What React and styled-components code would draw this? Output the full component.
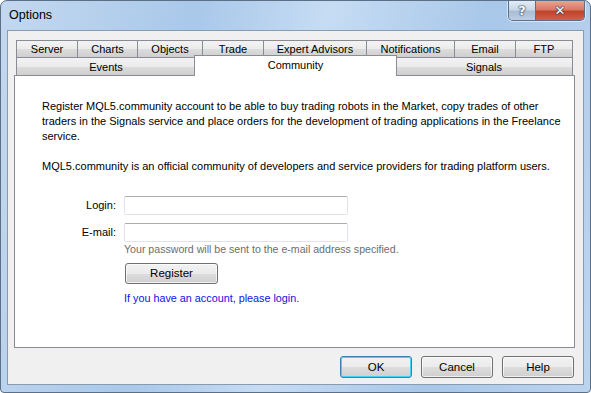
import React from 'react';
import styled, { createGlobalStyle } from 'styled-components';

const GlobalStyle = createGlobalStyle`
  html, body {
    margin: 0;
    padding: 0;
    background: #ffffff;
  }
  body {
    font-family: Tahoma, "Liberation Sans", Arial, sans-serif;
    font-size: 11px;
    color: #000;
  }
`;

const Window = styled.div`
  width: 591px;
  height: 393px;
  box-sizing: border-box;
  border: 1px solid #5b6f86;
  border-radius: 7px 7px 4px 4px;
  background: linear-gradient(
    100deg,
    #c3d8ef 0%,
    #a9c8ea 30%,
    #c6dcf3 50%,
    #a8c7e9 75%,
    #bcd4ee 100%
  );
  display: flex;
  flex-direction: column;
  overflow: hidden;
`;

const TitleBar = styled.div`
  height: 28px;
  display: flex;
  align-items: flex-start;
  justify-content: space-between;
  padding-left: 8px;
`;

const Title = styled.div`
  font-family: "Liberation Sans", Arial, sans-serif;
  font-size: 12.5px;
  line-height: 28px;
  color: #000;
`;

const CaptionButtons = styled.div`
  display: flex;
  margin-right: 5px;
  border: 1px solid #5d6f86;
  border-top: none;
  border-radius: 0 0 5px 5px;
  overflow: hidden;
  box-shadow: 0 0 0 1px rgba(255, 255, 255, 0.5);
`;

const CaptionButton = styled.div`
  width: ${(p) => p.width}px;
  height: 19px;
  display: flex;
  align-items: center;
  justify-content: center;
  color: #fff;
  font-family: "DejaVu Sans", sans-serif;
  font-weight: bold;
  font-size: ${(p) => p.size}px;
  text-shadow: 0 0 1px #2a3a50, 0 0 1px #2a3a50, 0 0 2px #2a3a50;
  background: ${(p) =>
    p.close
      ? 'linear-gradient(to bottom, #e8a493 0%, #d77b66 45%, #c0432a 55%, #d1604a 100%)'
      : 'linear-gradient(to bottom, #e3ecf6 0%, #c9d8e8 45%, #a9bdd4 55%, #bccfe3 100%)'};
  & + & {
    border-left: 1px solid #5d6f86;
  }
`;

const Client = styled.div`
  flex: 1;
  margin: 1px 6px 7px 6px;
  background: #f0f0f0;
  border: 1px solid #8a9bb0;
  display: flex;
  flex-direction: column;
  padding: 9px 8px 0 6px;
`;

const TabStrip = styled.div`
  display: flex;
  flex-direction: column;
  padding: 0 2px;
`;

const TabRow = styled.div`
  display: flex;
  height: ${(p) => (p.front ? 18 : 17)}px;
`;

const Tab = styled.div`
  width: ${(p) => p.width}px;
  box-sizing: border-box;
  border: 1px solid #898c95;
  border-bottom: none;
  margin-left: -1px;
  &:first-child {
    margin-left: 0;
  }
  background: linear-gradient(to bottom, #f3f3f3 0%, #ebebeb 50%, #dddddd 51%, #cfcfcf 100%);
  display: flex;
  align-items: center;
  justify-content: center;
  font-size: 11px;
  font-family: "Liberation Sans", Arial, sans-serif;
  white-space: nowrap;
`;

const ActiveTab = styled(Tab)`
  position: relative;
  z-index: 2;
  background: #ffffff;
  height: 21px;
  margin-top: -2px;
  margin-left: -2px;
  margin-right: -1px;
  width: ${(p) => p.width + 2}px;
  align-items: flex-start;
  padding-top: 3px;
`;

const Panel = styled.div`
  position: relative;
  z-index: 1;
  height: 273px;
  box-sizing: border-box;
  background: #ffffff;
  border: 1px solid #898c95;
  padding: 23px 0 0 27px;
  font-family: "Liberation Sans", Arial, sans-serif;
  font-size: 11px;
  line-height: 15px;
`;

const Para = styled.p`
  margin: 0 0 15px 0;
  white-space: nowrap;
`;

const Form = styled.div`
  display: grid;
  grid-template-columns: 74px 224px;
  column-gap: 8px;
  row-gap: 8px;
  margin-top: 22px;
  align-items: center;
`;

const Label = styled.div`
  text-align: right;
`;

const Input = styled.div`
  height: 19px;
  box-sizing: border-box;
  border: 1px solid #e2e3ea;
  border-top-color: #abadb3;
  border-radius: 2px;
  background: #fff;
`;

const Hint = styled.div`
  grid-column: 2;
  color: #6d6d6d;
  margin-top: -8px;
  white-space: nowrap;
  font-size: 10.6px;
`;

const Actions = styled.div`
  grid-column: 2;
  display: flex;
  flex-direction: column;
  align-items: flex-start;
  gap: 7px;
  margin-top: -2px;
`;

const Button = styled.div`
  width: ${(p) => p.width}px;
  height: ${(p) => p.height}px;
  box-sizing: border-box;
  border: 1px solid ${(p) => (p.primary ? '#3c7fb1' : '#707070')};
  border-radius: 3px;
  background: linear-gradient(to bottom, #f2f2f2 0%, #ebebeb 50%, #dddddd 51%, #cfcfcf 100%);
  box-shadow: inset 0 0 0 1px ${(p) => (p.primary ? '#48d0f8' : 'rgba(255,255,255,0.7)')};
  display: flex;
  align-items: center;
  justify-content: center;
  font-family: "Liberation Sans", Arial, sans-serif;
  font-size: 11.5px;
  margin-left: ${(p) => p.offset || 0}px;
`;

const LinkText = styled.div`
  color: #1010e8;
  font-size: 10.8px;
`;

const ButtonRow = styled.div`
  display: flex;
  justify-content: flex-end;
  gap: 9px;
  padding-top: 8px;
  padding-right: 1px;
`;

const backTabs = [
  ['Server', 62],
  ['Charts', 61],
  ['Objects', 66],
  ['Trade', 62],
  ['Expert Advisors', 104],
  ['Notifications', 89],
  ['Email', 62],
  ['FTP', 58],
];

export default function App() {
  return (
    <>
      <GlobalStyle />
      <Window>
        <TitleBar>
          <Title>Options</Title>
          <CaptionButtons>
            <CaptionButton width={26} size={13}>?</CaptionButton>
            <CaptionButton width={48} size={13} close>
              ✕
            </CaptionButton>
          </CaptionButtons>
        </TitleBar>
        <Client>
          <TabStrip>
            <TabRow>
              {backTabs.map(([name, w]) => (
                <Tab key={name} width={w}>
                  {name}
                </Tab>
              ))}
            </TabRow>
            <TabRow front>
              <Tab width={180}>Events</Tab>
              <ActiveTab width={201}>Community</ActiveTab>
              <Tab width={178}>Signals</Tab>
            </TabRow>
          </TabStrip>
          <Panel>
            <Para>
              Register MQL5.community account to be able to buy trading robots in the Market, copy trades of other
              <br />
              traders in the Signals service and place orders for the development of trading applications in the Freelance
              <br />
              service.
            </Para>
            <Para>
              MQL5.community is an official community of developers and service providers for trading platform users.
            </Para>
            <Form>
              <Label>Login:</Label>
              <Input />
              <Label>E-mail:</Label>
              <Input />
              <Hint>Your password will be sent to the e-mail address specified.</Hint>
              <Actions>
                <Button width={93} height={21} offset={1}>
                  Register
                </Button>
                <LinkText>If you have an account, please login.</LinkText>
              </Actions>
            </Form>
          </Panel>
          <ButtonRow>
            <Button width={72} height={22} primary>
              OK
            </Button>
            <Button width={72} height={22}>
              Cancel
            </Button>
            <Button width={72} height={22}>
              Help
            </Button>
          </ButtonRow>
        </Client>
      </Window>
    </>
  );
}
